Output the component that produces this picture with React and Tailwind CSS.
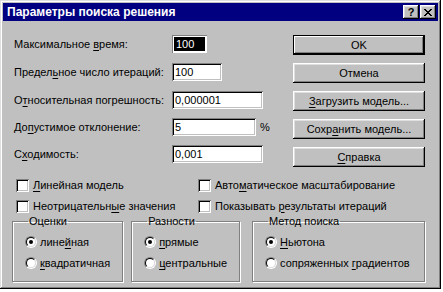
import React from 'react';

const raised =
  'shadow-[inset_-1px_-1px_0_#000,inset_1px_1px_0_#fff,inset_-2px_-2px_0_#808080,inset_2px_2px_0_#dfdfdf]';
const sunken =
  'shadow-[inset_1px_1px_0_#808080,inset_-1px_-1px_0_#fff,inset_2px_2px_0_#000,inset_-2px_-2px_0_#c0c0c0]';

// text with one underlined accelerator letter
const Acc = ({ text, at }) => {
  if (at == null) return <span>{text}</span>;
  return (
    <span>
      {text.slice(0, at)}
      <span className="underline underline-offset-[2px]">{text[at]}</span>
      {text.slice(at + 1)}
    </span>
  );
};

const Field = ({ label, at, value, width, selected, suffix, mt }) => (
  <div className={`flex h-[18px] items-center ${mt}`}>
    <div className="w-[158px] shrink-0">
      <Acc text={label} at={at} />
    </div>
    {selected ? (
      <div className={`h-[18px] ${width} p-[1px] shadow-[inset_1px_1px_0_#808080,inset_-1px_-1px_0_#fff]`}>
        <div className="flex h-full items-center border border-white bg-black pl-[2px] text-white">{value}</div>
      </div>
    ) : (
      <div className={`flex h-[18px] ${width} items-center bg-white pl-[3px] ${sunken}`}>{value}</div>
    )}
    {suffix && <span className="ml-[4px]">{suffix}</span>}
  </div>
);

const Button = ({ label, at, isDefault }) => (
  <div
    className={`flex h-[20px] w-[132px] items-center justify-center bg-[#c0c0c0] ${
      isDefault
        ? 'border border-black shadow-[inset_-1px_-1px_0_#000,inset_1px_1px_0_#fff,inset_-2px_-2px_0_#808080]'
        : raised
    }`}
  >
    <Acc text={label} at={at} />
  </div>
);

const Check = ({ label, at }) => (
  <div className="flex h-[14px] items-center gap-[4px]">
    <div className={`h-[13px] w-[13px] shrink-0 bg-white ${sunken}`} />
    <Acc text={label} at={at} />
  </div>
);

const Radio = ({ label, at, checked }) => (
  <div className="flex h-[14px] items-center gap-[3px]">
    <div className="h-[12px] w-[12px] shrink-0 rounded-full border border-t-[#808080] border-l-[#808080] border-r-white border-b-white">
      <div className="flex h-full w-full items-center justify-center rounded-full border border-t-black border-l-black border-r-[#dfdfdf] border-b-[#dfdfdf] bg-white">
        {checked && <div className="h-[4px] w-[4px] rounded-full bg-black" />}
      </div>
    </div>
    <Acc text={label} at={at} />
  </div>
);

const Group = ({ title, width, children }) => (
  <fieldset
    className={`${width} h-[67px] border border-[#808080] px-[12px] pt-[7px] shadow-[1px_1px_0_#fff,inset_1px_1px_0_#fff]`}
  >
    <legend className="ml-[3px] px-[1px] leading-[13px]">{title}</legend>
    <div className="flex flex-col gap-[7px]">{children}</div>
  </fieldset>
);

export default function App() {
  return (
    <div className="h-[292px] w-[443px] overflow-hidden bg-white font-['Liberation_Sans',Arial,sans-serif] text-[11px] text-black">
      <div className="flex h-[289px] w-[441px] flex-col bg-[#c0c0c0] p-[3px] shadow-[inset_-1px_-1px_0_#000,inset_1px_1px_0_#dfdfdf,inset_-2px_-2px_0_#808080,inset_2px_2px_0_#fff]">
        {/* title bar */}
        <div className="flex h-[18px] items-center bg-[#000080] pl-[4px] pr-[2px]">
          <span className="flex-1 text-[12px] font-bold text-white">Параметры поиска решения</span>
          <div className={`flex h-[14px] w-[16px] items-center justify-center bg-[#c0c0c0] text-[11px] font-bold ${raised}`}>
            ?
          </div>
          <div className={`ml-[1px] flex h-[14px] w-[16px] items-center justify-center bg-[#c0c0c0] ${raised}`}>
            <svg width="8" height="7" viewBox="0 0 8 7">
              <path d="M0 0h2v1h1v1h2V1h1V0h2v1H7v1H6v1H5v1h1v1h1v1h1v1H6V6H5V5H3v1H2v1H0V6h1V5h1V4h1V3H2V2H1V1H0z" fill="#000" />
            </svg>
          </div>
        </div>

        {/* body */}
        <div className="flex flex-col pl-[9px] pt-[14px]">
          <div className="flex">
            <div className="flex w-[281px] flex-col pl-[2px]">
              <Field label="Максимальное время:" at={13} value="100" width="w-[35px]" selected />
              <Field label="Предельное число итераций:" at={6} value="100" width="w-[50px]" mt="mt-[10px]" />
              <Field label="Относительная погрешность:" at={1} value="0,000001" width="w-[91px]" mt="mt-[10px]" />
              <Field label="Допустимое отклонение:" at={2} value="5" width="w-[84px]" suffix="%" mt="mt-[9px]" />
              <Field label="Сходимость:" at={1} value="0,001" width="w-[91px]" mt="mt-[9px]" />
            </div>
            <div className="flex flex-col gap-[8px]">
              <Button label="OK" isDefault />
              <Button label="Отмена" />
              <Button label="Загрузить модель..." at={0} />
              <Button label="Сохранить модель..." at={4} />
              <Button label="Справка" at={0} />
            </div>
          </div>

          <div className="mt-[11px] grid w-[400px] grid-cols-[182px_1fr] gap-y-[7px] pl-[4px]">
            <Check label="Линейная модель" at={0} />
            <Check label="Автоматическое масштабирование" at={4} />
            <Check label="Неотрицательные значения" at={13} />
            <Check label="Показывать результаты итераций" at={11} />
          </div>

          <div className="mt-[2px] flex">
            <Group title="Оценки" width="w-[110px]">
              <Radio label="линейная" at={4} checked />
              <Radio label="квадратичная" at={0} />
            </Group>
            <div className="ml-[8px]">
              <Group title="Разности" width="w-[108px]">
                <Radio label="прямые" at={0} checked />
                <Radio label="центральные" at={0} />
              </Group>
            </div>
            <div className="ml-[12px]">
              <Group title="Метод поиска" width="w-[173px]">
                <Radio label="Ньютона" at={0} checked />
                <Radio label="сопряженных градиентов" at={12} />
              </Group>
            </div>
          </div>
        </div>
      </div>
    </div>
  );
}
